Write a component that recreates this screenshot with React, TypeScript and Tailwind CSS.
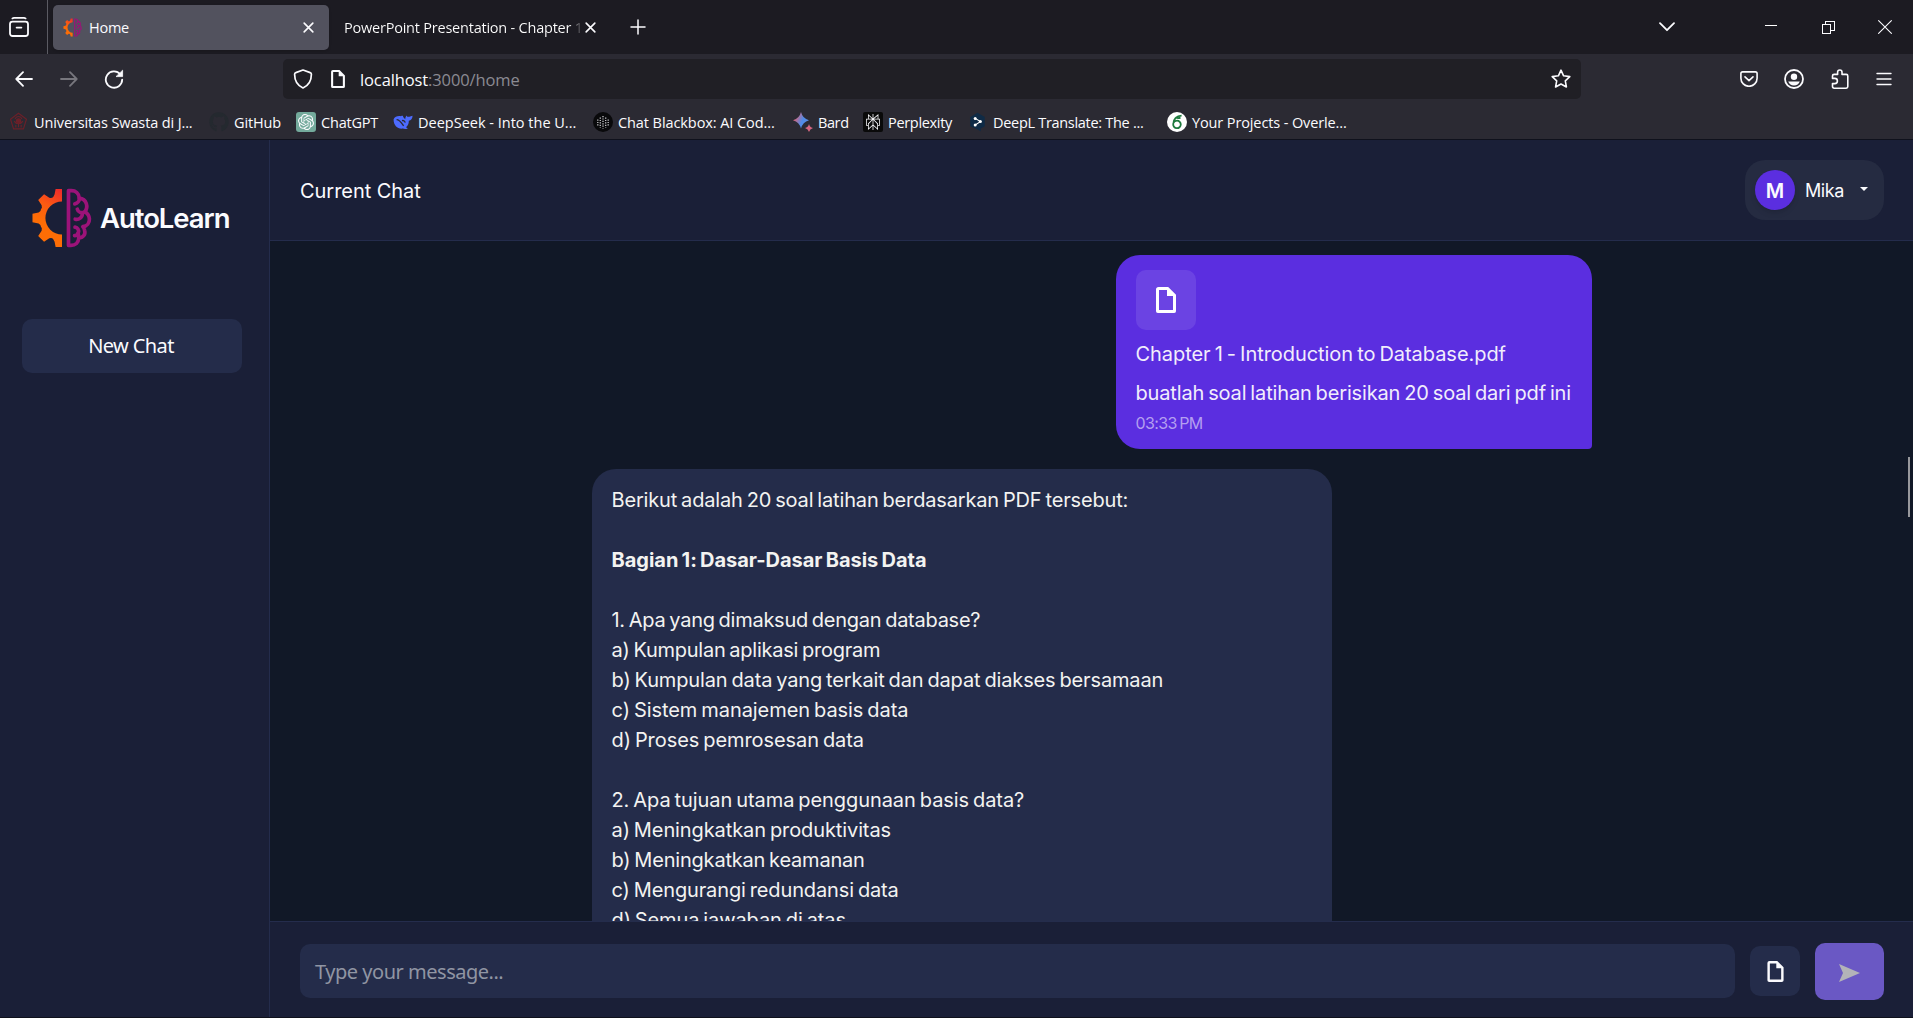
import React from "react";
import { FaGithub } from "react-icons/fa";
import { SiOpenai, SiPerplexity } from "react-icons/si";

const polar = (cx: number, cy: number, r: number, deg: number) => {
  const a = (deg * Math.PI) / 180;
  return `${(cx + r * Math.cos(a)).toFixed(2)} ${(cy - r * Math.sin(a)).toFixed(2)}`;
};

// Left half of an eight-tooth gear, traced from the top tooth round to the bottom one.
const gearPath = (() => {
  const cx = 31;
  const cy = 30;
  const p: string[] = [`M31 13.4V1H24.6`];
  p.push(`L23.6 6.2Q22.8 8 ${polar(cx, cy, 23, 112)}`);
  for (const t of [135, 180, 225]) {
    p.push(`Q${polar(cx, cy, 22, t - 18)} ${polar(cx, cy, 24, t - 13)}`);
    p.push(`L${polar(cx, cy, 29.8, t - 8)}L${polar(cx, cy, 29.8, t + 8)}`);
    p.push(`L${polar(cx, cy, 24, t + 13)}Q${polar(cx, cy, 22, t + 18)} ${polar(cx, cy, 22.8, t + 22)}`);
  }
  p.push(`Q22.8 52 23.6 53.8L24.6 59H31V46.6A16.6 16.6 0 0 1 31 13.4Z`);
  return p.join("");
})();

function Logo({ className, id }: { className: string; id: string }) {
  return (
    <svg viewBox="0 0 61 60" className={className} fill="none">
      <defs>
        <linearGradient id={id} x1="31" y1="2" x2="12" y2="34" gradientUnits="userSpaceOnUse">
          <stop offset="0" stopColor="#ee2a2c" />
          <stop offset="0.55" stopColor="#fb5a12" />
          <stop offset="1" stopColor="#fd6d05" />
        </linearGradient>
      </defs>
      <path d={gearPath} fill={`url(#${id})`} />
      <g stroke="#9c1379" strokeWidth="3.7" strokeLinecap="round" strokeLinejoin="round">
        <path d="M37.5 2.7V57.3H40C44.5 57.3 47.5 54.5 47.8 50C52 50 54.8 46.5 53.6 42.4C53.4 40.8 52.8 39.6 51.8 38.7C56 38.3 58.6 34.8 58.4 30.9C58.2 27.6 56.4 25.2 53.8 23.8C57.6 19 55.8 11 48.3 10.2C48 5.2 44.6 2.7 40.3 2.7Z" />
        <path d="M48.3 10.2C48.5 13 46.5 15.4 43.8 15.9" />
        <path d="M46.3 21.2C47 24.4 50.5 25.6 53.8 23.8" />
        <path d="M44.2 31.2C47.8 32 51.6 29.6 51.4 25.2" />
        <path d="M44 39.2C46.8 39.6 48.2 42.2 47.3 44.8C46.7 46.6 45.3 47.6 43.6 47.7" />
        <path d="M46.8 45.6C47.6 46.8 47.9 48.4 47.8 50" />
      </g>
    </svg>
  );
}

function FileIcon({ className }: { className: string }) {
  return (
    <svg viewBox="0 0 20 26" className={className}>
      <path fillRule="evenodd" fill="currentColor" d="M2.6 0H12.2L20 7.8V23.4A2.4 2.4 0 0 1 17.6 26H2.4A2.4 2.4 0 0 1 0 23.4V2.6A2.6 2.6 0 0 1 2.6 0ZM3 3V23H17V9H11V3Z" />
    </svg>
  );
}

const line = { fill: "none", stroke: "currentColor", strokeLinecap: "round", strokeLinejoin: "round" } as const;

function CloseX({ className }: { className: string }) {
  return (
    <svg viewBox="0 0 12 12" className={className} {...line} strokeWidth="1.5">
      <path d="M2 2l8 8M10 2l-8 8" />
    </svg>
  );
}

function TabBar() {
  return (
    <div className="flex h-[54px] shrink-0 items-center bg-[#1c1b22]">
      <div className="flex h-full w-[48px] shrink-0 items-center border-r border-[#5b5b63] pl-[9px]">
        <svg viewBox="0 0 20 20" className="size-5" {...line} strokeWidth="1.8">
          <path d="M3.4 1.4Q4.2 .9 5 .9H15Q15.8 .9 16.6 1.4" />
          <rect x="1" y="4.6" width="18" height="14.4" rx="2.5" />
          <path d="M7.6 10.6h4.8" />
        </svg>
      </div>
      <div className="ml-[5px] flex h-[45px] w-[276px] shrink-0 items-center rounded-[5px] bg-[#52525e] pl-[10px] pr-[14px] shadow-sm">
        <Logo id="favicon-gear" className="size-[19px]" />
        <span className="ml-[7px] pt-[2px] text-[14.5px] tracking-[-0.25px]">Home</span>
        <CloseX className="ml-auto size-[13px]" />
      </div>
      <div className="flex h-[45px] w-[285px] shrink-0 items-center pl-[15px]">
        <span className="w-[239px] overflow-hidden bg-linear-to-r from-white from-[94%] to-transparent bg-clip-text pt-[2px] text-[14.5px] tracking-[-0.22px] whitespace-nowrap text-transparent">
          PowerPoint Presentation - Chapter 1
        </span>
        <CloseX className="ml-[1px] size-[13px]" />
      </div>
      <svg viewBox="0 0 16 16" className="ml-[16px] size-4" {...line} strokeWidth="1.5">
        <path d="M8 1v14M1 8h14" />
      </svg>
      <div className="ml-auto flex items-center">
        <svg viewBox="0 0 18 10" className="mr-[89px] h-[10px] w-[18px]" {...line} strokeWidth="1.8">
          <path d="M2 1.2l7 7 7-7" />
        </svg>
        <div className="mr-[45px] mb-[3px] h-px w-[12px] bg-white" />
        <svg viewBox="0 0 13 13" className="mr-[43px] size-[13px]" fill="none" stroke="currentColor" shapeRendering="crispEdges">
          <path d="M.5 3.5h8v9h-8zM3.5 3.5v-3h9v9h-4" />
        </svg>
        <svg viewBox="0 0 14 14" className="mr-[21px] size-[14px]" {...line} strokeWidth="1.1">
          <path d="M.6 .6l12.8 12.8M13.4 .6L.6 13.4" />
        </svg>
      </div>
    </div>
  );
}

function NavBar() {
  return (
    <div className="flex h-[50px] shrink-0 items-center">
      <svg viewBox="0 0 18 16" className="ml-[15px] h-4 w-[18px]" {...line} strokeWidth="1.8">
        <path d="M17 8H1.5M8 1.2L1.3 8 8 14.8" />
      </svg>
      <svg viewBox="0 0 18 16" className="ml-[27px] h-4 w-[18px] text-[#77767d]" {...line} strokeWidth="1.8">
        <path d="M1 8h15.5M10 1.2L16.7 8 10 14.8" />
      </svg>
      <svg viewBox="0 0 20 20" className="ml-[26px] size-5" {...line} strokeWidth="1.8">
        <path d="M16.4 5.4A8.2 8.2 0 1 0 18.2 10.6" />
        <path d="M18.6 1.6V7.6H12.4Z" fill="currentColor" strokeWidth="0.8" />
      </svg>
      <div className="ml-[159px] flex h-[40px] w-[1298px] items-center rounded-[5px] bg-[#201f25] pl-[10px] pr-[10px]">
        <svg viewBox="0 0 20 20" className="size-5" {...line} strokeWidth="1.7">
          <path d="M10 1L17.2 3.6Q18.4 4 18.4 5.2C18.4 12 15.6 16.4 10 19C4.4 16.4 1.6 12 1.6 5.2Q1.6 4 2.8 3.6Z" />
        </svg>
        <FileIcon className="ml-[17px] h-[18px] w-[16px]" />
        <span className="ml-[14px] pt-[3px] text-[16.5px] tracking-[-0.12px] text-[#8b8a92]">
          <span className="text-[#fbfbfe]">localhost</span>:3000/home
        </span>
        <svg viewBox="0 0 20 20" className="ml-auto size-5" {...line} strokeWidth="1.6">
          <path d="M10 1.2l2.6 5.6 6.2.8-4.5 4.2 1.1 6.2L10 15l-5.4 3 1.1-6.2L1.2 7.6l6.2-.8z" />
        </svg>
      </div>
      <div className="ml-auto flex items-center">
        <svg viewBox="0 0 18 16" className="mr-[26px] h-4 w-[18px]" {...line} strokeWidth="1.6">
          <path d="M2.6 .9h12.8q1.7 0 1.7 1.7v4.6a8.1 8.1 0 0 1-16.2 0V2.6q0-1.7 1.7-1.7z" />
          <path d="M5 5.8l4 3.8 4-3.8" />
        </svg>
        <svg viewBox="0 0 20 20" className="mr-[27px] size-5">
          <circle cx="10" cy="10" r="9" fill="none" stroke="currentColor" strokeWidth="1.8" />
          <circle cx="10" cy="7.8" r="3.2" fill="currentColor" />
          <path d="M4.2 12.4h11.6q-1.6 4-5.8 4t-5.8-4z" fill="currentColor" />
        </svg>
        <svg viewBox="0 0 18 20" className="mr-[27px] h-5 w-[18px]" {...line} strokeWidth="1.6">
          <path d="M1.5 9V7q0-1.6 1.6-1.6H6.6V3.2a2.2 2.2 0 0 1 4.4 0V5.4h4.2q1.6 0 1.6 1.6v10.6q0 1.6-1.6 1.6H3.1q-1.6 0-1.6-1.6V14.6H3.8a2.4 2.4 0 0 0 0-5.2H1.5z" />
        </svg>
        <svg viewBox="0 0 16 14" className="mr-[21px] h-[14px] w-4" {...line} strokeWidth="1.4">
          <path d="M1 1.5h14M1 7h14M1 12.5h14" />
        </svg>
      </div>
    </div>
  );
}

const bookmarks = [
  {
    label: "Universitas Swasta di J...", box: "w-[200px]", track: "tracking-[-0.12px]",
    icon: (
      <svg viewBox="0 0 20 20" className="size-[19px]" fill="none" stroke="#6b2029" strokeWidth="1.2">
        <path d="M10 1.4l8.4 6.2-3.2 10.2H4.8L1.6 7.6z" />
        <path d="M6.4 7.4c1.4-3.6 5.8-3.6 7.2 0M5.4 9.6c1.8 3.4 7.4 3.4 9.2 0M10 8v8M7.2 13.6v2.6M12.8 13.6v2.6" />
        <circle cx="10" cy="9.4" r="2.2" fill="#6b2029" />
      </svg>
    ),
  },
  { label: "GitHub", box: "w-[87px]", track: "tracking-[-0.13px]", icon: <FaGithub className="size-[20px] text-[#24292f]" /> },
  {
    label: "ChatGPT", box: "w-[97px]", track: "tracking-[-0.2px]",
    icon: (
      <span className="flex size-[20px] items-center justify-center rounded-[3px] bg-[#74aa9c]">
        <SiOpenai className="size-[16px]" />
      </span>
    ),
  },
  {
    label: "DeepSeek - Into the U...", box: "w-[200px]", track: "tracking-[0px]",
    icon: (
      <svg viewBox="0 0 20 16" className="h-[16px] w-[20px]">
        <path fill="#4d6bfe" d="M.6 5.2C1.8 2.4 5 1.6 8 2.2c.6-.6 1.6-.6 2-.2 0 1.4 1.4 2 2.2 3.2C12.4 3.4 12.8 2.4 13.6 1.4c.4 1.4 1.6 1.6 2.8 1.4 1-.2 1.8-.8 3.2-1-.2 3-1.6 4.6-3.8 5 .2 3-1 5-2.8 6.400l1.800 1.200c-2 1-3.600.8-5 .2C5 15.400.4 11.400.6 5.200z" />
        <path fill="none" stroke="#2b2a33" strokeWidth="1.3" d="M3.600 5.600c3 0 4.800 3 7 6.200M9 6.600c1.800-.4 3 .8 3.200 2" />
      </svg>
    ),
  },
  {
    label: "Chat Blackbox: AI Cod...", box: "w-[200px]", track: "tracking-[-0.08px]",
    icon: (
      <svg viewBox="0 0 20 20" className="size-[20px]">
        <circle cx="10" cy="10" r="10" fill="#09090b" />
        <path d="M10 4v12.500M7.300 5.500v10M12.700 5.500v10M4.800 7.500v6M15.200 7.500v6" stroke="#c9c9cc" strokeWidth="1.300" strokeDasharray="1.200 1.200" />
      </svg>
    ),
  },
  {
    label: "Bard", box: "w-[70px]", track: "tracking-[-0.4px]",
    icon: (
      <svg viewBox="0 0 20 20" className="size-[20px]">
        <defs>
          <linearGradient id="bard" x1="0" y1="0.200" x2="1" y2="0.700">
            <stop offset="0.150" stopColor="#d9657a" />
            <stop offset="0.600" stopColor="#4f8be8" />
            <stop offset="1" stopColor="#5f8be0" />
          </linearGradient>
        </defs>
        <path fill="url(#bard)" d="M8 0Q9.600 6.400 16 8.300 9.600 10.200 8 16.600 6.400 10.200 0 8.300 6.400 6.400 8 0z" />
        <path fill="#d5657f" d="M16 12q.8 3.300 4 4-3.200.8-4 4-.8-3.200-4-4 3.200-.7 4-4z" />
      </svg>
    ),
  },
  {
    label: "Perplexity", box: "w-[105px]", track: "tracking-[-0.32px]",
    icon: (
      <span className="flex size-[20px] items-center justify-center rounded-[2px] bg-[#0a0a0a]">
        <SiPerplexity className="size-[16px]" />
      </span>
    ),
  },
  {
    label: "DeepL Translate: The ...", box: "w-[199px]", track: "tracking-[-0.3px]",
    icon: (
      <svg viewBox="0 0 20 20" className="size-[20px]">
        <path fill="#0f2b46" d="M9.500 .8l7.200 4.200v9.200l-4 2.300v2.700l-3.600-2L2.300 14.200V5z" />
        <path d="M7.200 6.400l5.200 3.200-5.200 3.400" fill="none" stroke="#fff" strokeWidth="1.100" />
        <g fill="#fff"><circle cx="7.200" cy="6.400" r="1.500" /><circle cx="12.400" cy="9.600" r="1.500" /><circle cx="7.200" cy="13" r="1.500" /></g>
      </svg>
    ),
  },
  {
    label: "Your Projects - Overle...", box: "w-[190px]", track: "tracking-[-0.12px]",
    icon: (
      <svg viewBox="0 0 20 20" className="size-[20px]">
        <circle cx="10" cy="10" r="10" fill="#fff" />
        <path d="M14.600 3.600C9.500 3.600 6.200 7.500 6.200 12a3.800 3.800 0 1 0 3.800-3.400c-1.700 0-3 .9-3.600 2.200M8.500 5.400q2.500 1.200 5 .2" fill="none" stroke="#1e7a3e" strokeWidth="1.800" />
      </svg>
    ),
  },
];

function Bookmarks() {
  return (
    <div className="flex h-[35px] shrink-0 items-center pl-[9px]">
      {bookmarks.map((b) => (
        <div key={b.label} className={`flex shrink-0 items-center ${b.box}`}>
          <span className="flex w-[25px] shrink-0">{b.icon}</span>
          <span className={`pt-[2px] text-[14.5px] whitespace-nowrap ${b.track}`}>{b.label}</span>
        </div>
      ))}
    </div>
  );
}

function Sidebar() {
  return (
    <aside className="flex w-[270px] shrink-0 flex-col border-r border-[#242c4c] bg-[#1a1f37]">
      <div className="mt-[48px] flex h-[60px] items-center pl-[31px]">
        <Logo id="brand-gear" className="h-[60px] w-[61px] shrink-0" />
        <span className="ml-[8px] pt-px font-['Inter',sans-serif] text-[27.5px] font-semibold tracking-[-1.05px]">AutoLearn</span>
      </div>
      <button className="mt-[71px] ml-[22px] h-[54px] w-[220px] rounded-[10px] bg-[#242c4a] pr-[2px] font-['Noto_Sans',sans-serif] text-[20px] tracking-[-0.6px]">
        New Chat
      </button>
    </aside>
  );
}

const answer: [string, string][] = [
  ["Berikut adalah 20 soal latihan berdasarkan PDF tersebut:", "tracking-[-0.16px]"],
  ["", ""],
  ["Bagian 1: Dasar-Dasar Basis Data", "font-bold tracking-[-0.02px]"],
  ["", ""],
  ["1. Apa yang dimaksud dengan database?", "tracking-[-0.26px]"],
  ["a) Kumpulan aplikasi program", "tracking-[-0.25px]"],
  ["b) Kumpulan data yang terkait dan dapat diakses bersamaan", "tracking-[-0.14px]"],
  ["c) Sistem manajemen basis data", "tracking-[-0.07px]"],
  ["d) Proses pemrosesan data", "tracking-[-0.08px]"],
  ["", ""],
  ["2. Apa tujuan utama penggunaan basis data?", "tracking-[-0.08px]"],
  ["a) Meningkatkan produktivitas", "tracking-[-0.1px]"],
  ["b) Meningkatkan keamanan", "tracking-[-0.2px]"],
  ["c) Mengurangi redundansi data", "tracking-[-0.13px]"],
  ["d) Semua jawaban di atas", "tracking-[-0.11px]"],
];

function Messages() {
  return (
    <div className="relative min-h-0 flex-1 overflow-hidden bg-[#111827] font-['Inter',sans-serif] text-[20px] [word-spacing:-1.5px]">
      <div className="mx-auto flex w-[1000px] flex-col pt-[14px]">
        <div className="mr-0 ml-auto flex h-[194px] w-[476px] flex-col rounded-[24px] rounded-br-[4px] bg-[#5b2ee0] px-[20px] pt-[15px] text-[#f1edfc]">
          <div className="flex size-[60px] items-center justify-center rounded-[10px] bg-white/10 text-white">
            <FileIcon className="h-[26px] w-[20px]" />
          </div>
          <p className="mt-[9px] leading-[30px] tracking-[-0.05px] whitespace-nowrap">Chapter 1 - Introduction to Database.pdf</p>
          <p className="mt-[9px] leading-[30px] tracking-[-0.15px] whitespace-nowrap">buatlah soal latihan berisikan 20 soal dari pdf ini</p>
          <p className="mt-[3px] text-[16px] leading-[24px] tracking-[-0.6px] text-[#b49ff0]">03:33 PM</p>
        </div>
        <div className="mt-[20px] h-[800px] w-[740px] rounded-t-[24px] bg-[#242c4a] px-[20px] pt-[16px] text-[#f3f3f1]">
          {answer.map(([text, style], i) => (
            <p key={i} className={`h-[30px] leading-[30px] whitespace-nowrap ${style}`}>{text}</p>
          ))}
        </div>
      </div>
      <div className="absolute top-[216px] right-[3px] h-[60px] w-[2px] bg-[#98989c]" />
    </div>
  );
}

function Composer() {
  return (
    <div className="flex h-[96px] shrink-0 items-center border-t border-[#242c4c] bg-[#1a1f37] pt-[3px] pl-[30px]">
      <div className="flex h-[54px] w-[1435px] items-center rounded-[10px] bg-[#242c4a] pt-px pl-[15px] font-['Noto_Sans',sans-serif] text-[20px] tracking-[-0.48px] text-[#9095a3]">
        Type your message...
      </div>
      <button className="ml-[15px] flex size-[50px] items-center justify-center rounded-[10px] bg-[#242c4a] pl-px">
        <FileIcon className="h-[21px] w-[17px]" />
      </button>
      <button className="ml-[15px] flex h-[57px] w-[69px] items-center justify-center rounded-[10px] bg-[#6a58c4] pt-[4px]">
        <svg viewBox="0 0 21 18" className="h-[18px] w-[21px]">
          <path d="M0 0L21 9 0 18 4 9z" fill="#b3b3b8" />
        </svg>
      </button>
    </div>
  );
}

export default function App() {
  return (
    <div className="flex h-[1018px] w-[1913px] flex-col overflow-hidden bg-[#2b2a33] font-['Open_Sans','Noto_Sans',sans-serif] text-[#fbfbfe]">
      <TabBar />
      <NavBar />
      <Bookmarks />
      <div className="flex min-h-0 flex-1 border-y border-[#0f111c]">
        <Sidebar />
        <main className="flex min-w-0 flex-1 flex-col">
          <header className="flex h-[101px] shrink-0 items-center border-b border-[#242c4c] bg-[#1a1f37] pr-[29px] pl-[30px] font-['Inter',sans-serif]">
            <h1 className="pt-[2px] text-[20px] tracking-[-0.05px]">Current Chat</h1>
            <div className="ml-auto flex h-[60px] w-[139px] items-center rounded-[20px] bg-[#252b41] pl-[10px]">
              <div className="flex size-[40px] items-center justify-center rounded-full bg-[#5b2ee0] pt-px text-[20px] font-semibold shadow-md">M</div>
              <span className="ml-[10px] pt-px text-[18px] tracking-[-0.4px]">Mika</span>
              <svg viewBox="0 0 8 4" className="mb-[3px] ml-[16px] h-[4px] w-[8px]">
                <path d="M0 0H8L4 4z" fill="currentColor" />
              </svg>
            </div>
          </header>
          <Messages />
          <Composer />
        </main>
      </div>
    </div>
  );
}
